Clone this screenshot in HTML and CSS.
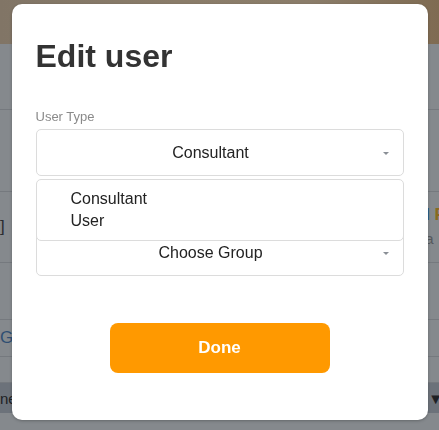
FILE: index.html
```html
<!DOCTYPE html>
<html lang="en">
<head>
    <meta charset="UTF-8">
    <meta name="viewport" content="width=device-width, initial-scale=1.0">
    <title>Edit user</title>
    <link rel="stylesheet" href="styles.css">
</head>
<body>
    <div class="page">
        <div class="page-header"></div>
        <div class="page-row row-a"></div>
        <div class="page-row row-b"></div>
        <div class="page-row row-c">
            <span class="bg-left">]</span>
            <span class="bg-right stack"><span><b class="blue">l</b> <b class="gold">F</b></span><span class="muted">a</span></span>
        </div>
        <div class="page-row row-d"></div>
        <div class="page-row row-e"><span class="bg-left blue-g">G</span></div>
        <div class="page-row row-f"></div>
        <div class="page-band"><span class="bg-left">ne</span><span class="bg-right">&#9660;</span></div>
    </div>

    <div class="overlay">
        <div class="modal">
            <h2>Edit user</h2>

            <div class="field">
                <label>User Type</label>
                <div class="select">
                    <span>Consultant</span>
                    <i class="caret"></i>
                </div>
                <ul class="menu">
                    <li>Consultant</li>
                    <li>User</li>
                </ul>
            </div>

            <div class="field field-group">
                <label>Group</label>
                <div class="select">
                    <span>Choose Group</span>
                    <i class="caret"></i>
                </div>
            </div>

            <button type="button" class="done">Done</button>
        </div>
    </div>
</body>
</html>
```

FILE: styles.css
```css
body {
    margin: 0;
    font-family: "Liberation Sans", Arial, sans-serif;
    background-color: #85898d;
    height: 430px;
    overflow: hidden;
}

/* dimmed page behind the dialog */
.page-header {
    height: 44px;
    background: linear-gradient(90deg, #817566 0%, #8a7c69 40%, #8b7d6a 70%, #7f6b52 100%);
}

.page-row {
    border-bottom: 1px solid #75797e;
    display: flex;
    justify-content: space-between;
    align-items: center;
    font-size: 17px;
    color: #2a2d31;
}

.row-a { height: 65px; }
.row-b { height: 81px; }
.row-c { height: 70px; }
.row-d { height: 56px; }
.row-e { height: 36px; }
.row-f { height: 25px; }

.page-band {
    height: 30px;
    background-color: #6c727a;
    display: flex;
    justify-content: space-between;
    align-items: center;
    font-size: 15px;
    color: #1e2125;
}

.bg-right { margin-right: -4px; }
.stack {
    display: flex;
    flex-direction: column;
    line-height: 24px;
    margin-right: -6px;
}
.blue { color: #2c5a8c; }
.gold { color: #8a6a1e; }
.blue-g { color: #2f4e72; }
.muted { color: #55595e; font-size: 15px; }

.overlay {
    position: fixed;
    top: 0;
    left: 0;
    right: 0;
    bottom: 0;
    display: flex;
    justify-content: center;
    align-items: flex-start;
    padding-top: 4px;
}

.modal {
    width: 368px;
    background-color: #fff;
    border-radius: 10px;
    padding: 34px 24px 47px;
    box-shadow: 0 1px 3px rgba(0, 0, 0, 0.25);
}

.modal h2 {
    margin: 0 0 34px;
    font-size: 32px;
    font-weight: bold;
    color: #333;
    line-height: 37px;
}

.field {
    position: relative;
    display: flex;
    flex-direction: column;
}

.field label {
    font-size: 13px;
    line-height: 15px;
    color: #8a8a8a;
    margin-bottom: 5px;
}

.field-group {
    margin-top: 33px;
}

.select {
    position: relative;
    height: 45px;
    border: 1px solid #dcdcdc;
    border-radius: 5px;
    padding-right: 18px;
    display: flex;
    justify-content: center;
    align-items: center;
    font-size: 16px;
    color: #222;
}

.caret {
    position: absolute;
    right: 14px;
    top: 22px;
    width: 0;
    height: 0;
    border-left: 3px solid transparent;
    border-right: 3px solid transparent;
    border-top: 3px solid #8a8f96;
}

.menu {
    position: absolute;
    top: 70px;
    left: 0;
    right: 0;
    z-index: 2;
    margin: 0;
    padding: 8px 0 8px 34px;
    list-style: none;
    background-color: #fff;
    border: 1px solid #dcdcdc;
    border-radius: 5px;
    font-size: 16px;
    line-height: 22px;
    color: #222;
}

.done {
    display: block;
    margin: 47px auto 0;
    width: 220px;
    height: 50px;
    border: none;
    border-radius: 8px;
    background-color: #ff9900;
    color: #fff;
    font-family: "Liberation Sans", Arial, sans-serif;
    font-size: 17px;
    font-weight: bold;
    cursor: pointer;
}
```
